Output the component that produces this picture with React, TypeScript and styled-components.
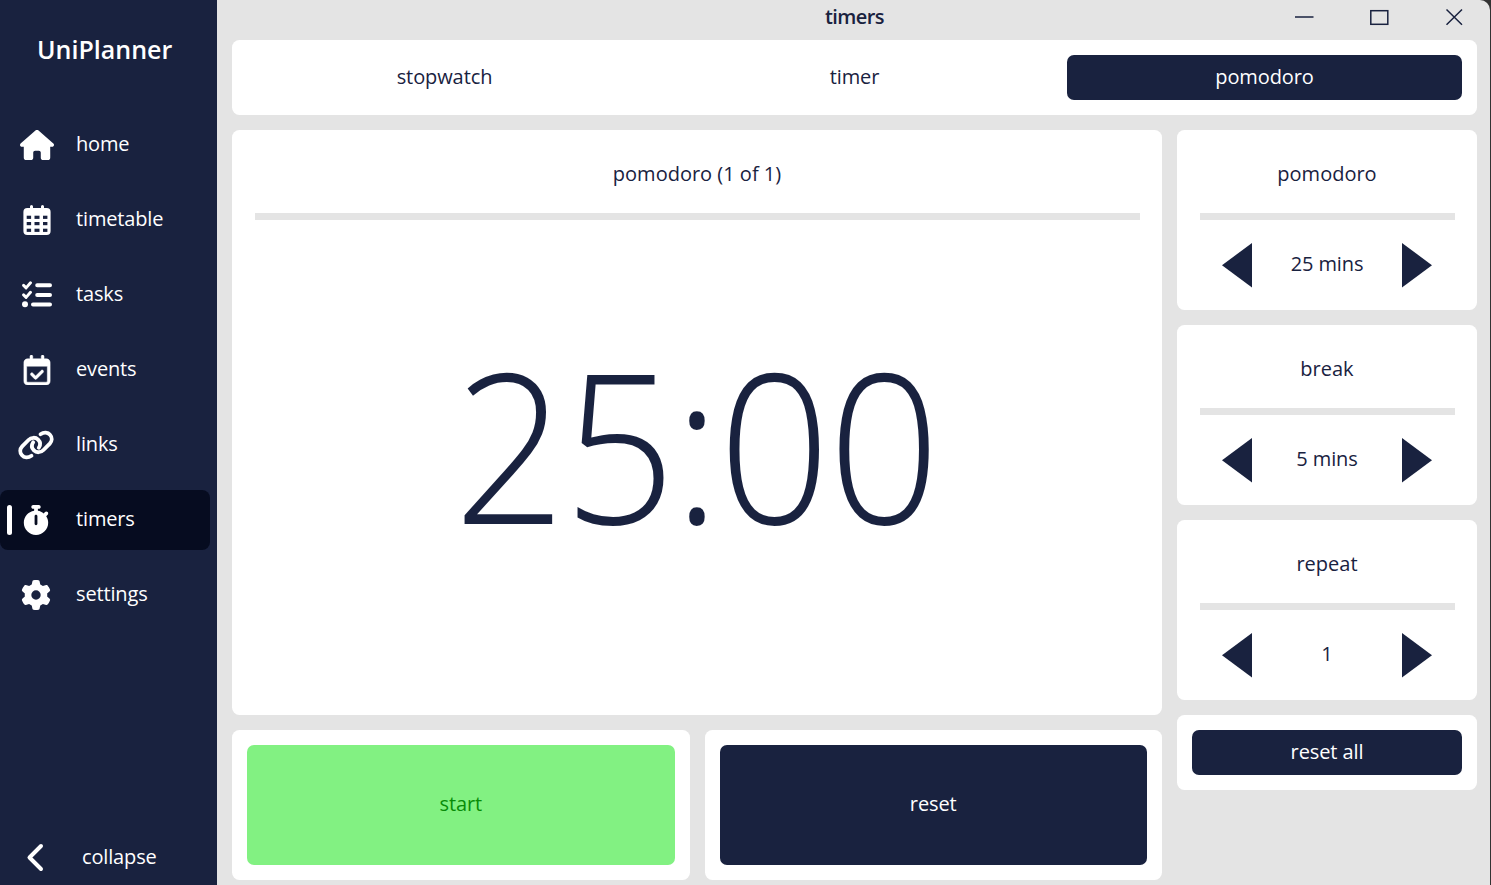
import React from "react";
import styled, { createGlobalStyle } from "styled-components";
import { FaGear, FaHouse, FaRegCalendarCheck, FaStopwatch } from "react-icons/fa6";

const navy = "#19223f";
const grey = "#e4e4e4";

const GlobalStyle = createGlobalStyle`
  * { box-sizing: border-box; }
  body {
    margin: 0;
    background: #333;
    overflow: hidden;
    font-family: "Open Sans", "Noto Sans", sans-serif;
    font-size: 20px;
    color: ${navy};
  }
  button { font: inherit; color: inherit; border: 0; background: none; padding: 0; cursor: pointer; }
`;

const Window = styled.div`
  display: flex;
  width: 1490px;
  height: 885px;
  background: ${grey};
  border-top-right-radius: 10px;
  overflow: hidden;
`;

const Sidebar = styled.aside`
  width: 217px;
  display: flex;
  flex-direction: column;
  background: ${navy};
  color: #fff;
`;

const Brand = styled.h1`
  margin: 0;
  height: 115px;
  padding: 32px 0 0 37px;
  font-size: 25px;
  line-height: 34px;
  font-weight: 600;
`;

const Nav = styled.nav`
  display: flex;
  flex-direction: column;
  gap: 15px;
`;

const NavItem = styled.button<{ $active?: boolean }>`
  display: flex;
  align-items: center;
  width: 209.5px;
  height: 60px;
  border-radius: 8px;
  background: ${(p) => (p.$active ? "#060c20" : "transparent")};
`;

const Marker = styled.span<{ $on?: boolean }>`
  width: 5px;
  height: 30px;
  margin-left: 7px;
  border-radius: 3px;
  background: ${(p) => (p.$on ? "#fff" : "transparent")};
`;

const NavIcon = styled.span<{ $shift: number }>`
  display: flex;
  justify-content: center;
  width: 48px;
  margin-left: ${(p) => p.$shift}px;
  margin-right: ${(p) => 16 - p.$shift}px;
  svg { display: block; flex: none; }
`;

const NavLabel = styled.span`
  line-height: 28px;
  padding-bottom: 2px;
  letter-spacing: -0.15px;
`;

const Collapse = styled.button`
  display: flex;
  align-items: center;
  gap: 37px;
  height: 56px;
  margin-top: auto;
  padding-left: 25px;
  svg { display: block; }
  ${NavLabel} { padding-bottom: 0; }
`;

const Main = styled.main`
  flex: 1;
  display: flex;
  flex-direction: column;
  padding: 0 13px 5px 15px;
`;

const TitleBar = styled.header`
  display: grid;
  grid-template-columns: 1fr auto 1fr;
  height: 40px;
`;

const Title = styled.h2`
  grid-column: 2;
  margin: 0;
  font-size: 20px;
  line-height: 33px;
  font-weight: 600;
  letter-spacing: -0.6px;
`;

const WindowButtons = styled.div`
  display: flex;
  justify-content: flex-end;
  gap: 55px;
  padding: 7px 12px 0 0;
  svg { display: block; }
`;

const Card = styled.section`
  background: #fff;
  border-radius: 7.5px;
`;

const Tabs = styled(Card)`
  display: flex;
  gap: 15px;
  height: 75px;
  padding: 15px;
`;

const Button = styled.button<{ $tone?: "navy" | "green"; $large?: boolean }>`
  flex: 1;
  height: 100%;
  padding-bottom: ${(p) => (p.$large ? 3 : 2)}px;
  border-radius: 7px;
  letter-spacing: -0.1px;
  background: ${(p) => (p.$tone === "navy" ? navy : p.$tone === "green" ? "#82f182" : "transparent")};
  color: ${(p) => (p.$tone === "navy" ? "#fff" : p.$tone === "green" ? "#088c08" : navy)};
`;

const Content = styled.div`
  display: grid;
  grid-template-columns: 930px 300px;
  gap: 15px;
  padding-top: 15px;
`;

const Column = styled.div`
  display: flex;
  flex-direction: column;
  gap: 15px;
`;

const ClockCard = styled(Card)`
  display: flex;
  flex-direction: column;
  height: 585px;
  padding: 7.5px 22.5px;
`;

const Heading = styled.h3`
  margin: 0;
  height: 75px;
  line-height: 71px;
  font-size: 20px;
  font-weight: 400;
  text-align: center;
`;

const Divider = styled.hr`
  width: 100%;
  height: 7.5px;
  margin: 0;
  border: 0;
  background: ${grey};
`;

const Digits = styled.div`
  flex: 1;
  margin-left: -3px;
  line-height: 448px;
  font-size: 208px;
  font-weight: 300;
  letter-spacing: -2px;
  text-align: center;
  transform: scaleX(0.942);
`;

const Actions = styled.div`
  display: flex;
  gap: 15px;
`;

const ActionCard = styled(Card)`
  display: flex;
  flex: 1;
  height: 150px;
  padding: 15px;
`;

const SettingCard = styled(Card)`
  height: 180px;
  padding: 7.5px 22.5px;
`;

const Stepper = styled.div`
  display: flex;
  align-items: center;
  justify-content: space-between;
  height: 90px;
  padding: 0 22.5px;
  svg { display: block; }
`;

const Value = styled.span`
  padding-bottom: 4px;
  letter-spacing: -0.1px;
`;

const ResetCard = styled(Card)`
  display: flex;
  height: 75px;
  padding: 15px;
`;

const Arrow = ({ left }: { left?: boolean }) => (
  <svg width="30" height="45" viewBox="0 0 30 45">
    <path d={left ? "M30 0V44.5L0 22.2Z" : "M0 0V44.5L30 22.2Z"} fill={navy} />
  </svg>
);

const TimetableIcon = () => (
  <svg width="30" height="30" viewBox="0 0 30 30">
    <rect x="1.4" y="3" width="27.2" height="27" rx="4" fill="#fff" />
    <path d="M9.5 1.6V5M20.5 1.6V5" stroke="#fff" strokeWidth="3" strokeLinecap="round" />
    {[10.7, 17, 23.7].map((y) =>
      [4.7, 12.5, 21].map((x) => (
        <rect key={`${x}-${y}`} x={x} y={y} width={x === 12.5 ? 5 : 4.4} height="3.2" fill={navy} />
      ))
    )}
  </svg>
);

const TasksIcon = () => (
  <svg width="30" height="30" viewBox="0 0 30 30" fill="none" stroke="#fff" strokeLinecap="round" strokeLinejoin="round">
    <path d="M1.6 5.4L4.1 7.9L8.5 2.8M1.6 14.9L4.1 17.4L8.5 12.3" strokeWidth="2.9" />
    <path d="M15.2 5.3H28M15.2 14.9H28M11 24.4H28" strokeWidth="4" />
    <circle cx="3" cy="24.3" r="3" fill="#fff" stroke="none" />
  </svg>
);

const LinksIcon = () => {
  const hook =
    "M22.5 4.3C26 1.9 30 2.4 32 4.8C34.5 7.6 34.2 11 31.8 13.6L25.5 20C22.8 22.8 18.5 23 15.9 20.4C13.7 18.2 13.3 15 15.2 12.2";
  return (
    <svg width="36" height="30" viewBox="0 0 36 30" fill="none" stroke="#fff" strokeWidth="3.8" strokeLinecap="round">
      <path d={hook} />
      <path d={hook} transform="rotate(180 18 15)" />
    </svg>
  );
};

const navItems = [
  { label: "home", icon: <FaHouse size={34} />, shift: 1 },
  { label: "timetable", icon: <TimetableIcon />, shift: 1 },
  { label: "tasks", icon: <TasksIcon />, shift: 1 },
  { label: "events", icon: <FaRegCalendarCheck size={30} stroke="#fff" strokeWidth={8} />, shift: 1 },
  { label: "links", icon: <LinksIcon />, shift: 0 },
  { label: "timers", icon: <FaStopwatch size={30} />, shift: 0, active: true },
  { label: "settings", icon: <FaGear size={30} />, shift: 0 },
];

const settings = [
  { name: "pomodoro", value: "25 mins" },
  { name: "break", value: "5 mins" },
  { name: "repeat", value: "1" },
];

export default function App() {
  return (
    <>
      <GlobalStyle />
      <Window>
        <Sidebar>
          <Brand>UniPlanner</Brand>
          <Nav>
            {navItems.map(({ label, icon, shift, active }) => (
              <NavItem key={label} $active={active}>
                <Marker $on={active} />
                <NavIcon $shift={shift}>{icon}</NavIcon>
                <NavLabel>{label}</NavLabel>
              </NavItem>
            ))}
          </Nav>
          <Collapse>
            <svg width="20" height="30" viewBox="0 0 20 30">
              <path d="M16 4L4.5 15.5L16 27" fill="none" stroke="#fff" strokeWidth="4" strokeLinecap="round" strokeLinejoin="round" />
            </svg>
            <NavLabel>collapse</NavLabel>
          </Collapse>
        </Sidebar>
        <Main>
          <TitleBar>
            <Title>timers</Title>
            <WindowButtons>
              <svg width="20" height="20" viewBox="0 0 20 20">
                <path d="M0 10H18.5" stroke={navy} strokeWidth="1.6" />
              </svg>
              <svg width="20" height="20" viewBox="0 0 20 20">
                <rect x="0.8" y="3.7" width="17" height="13.6" fill="none" stroke={navy} strokeWidth="1.5" />
              </svg>
              <svg width="20" height="20" viewBox="0 0 20 20">
                <path d="M1.5 2.5L17 17.7M17 2.5L1.5 17.7" stroke={navy} strokeWidth="1.5" />
              </svg>
            </WindowButtons>
          </TitleBar>
          <Tabs>
            <Button>stopwatch</Button>
            <Button>timer</Button>
            <Button $tone="navy">pomodoro</Button>
          </Tabs>
          <Content>
            <Column>
              <ClockCard>
                <Heading>pomodoro (1 of 1)</Heading>
                <Divider />
                <Digits>25:00</Digits>
              </ClockCard>
              <Actions>
                <ActionCard>
                  <Button $tone="green" $large>start</Button>
                </ActionCard>
                <ActionCard>
                  <Button $tone="navy" $large>reset</Button>
                </ActionCard>
              </Actions>
            </Column>
            <Column>
              {settings.map((s) => (
                <SettingCard key={s.name}>
                  <Heading>{s.name}</Heading>
                  <Divider />
                  <Stepper>
                    <button aria-label="decrease">
                      <Arrow left />
                    </button>
                    <Value>{s.value}</Value>
                    <button aria-label="increase">
                      <Arrow />
                    </button>
                  </Stepper>
                </SettingCard>
              ))}
              <ResetCard>
                <Button $tone="navy">reset all</Button>
              </ResetCard>
            </Column>
          </Content>
        </Main>
      </Window>
    </>
  );
}
